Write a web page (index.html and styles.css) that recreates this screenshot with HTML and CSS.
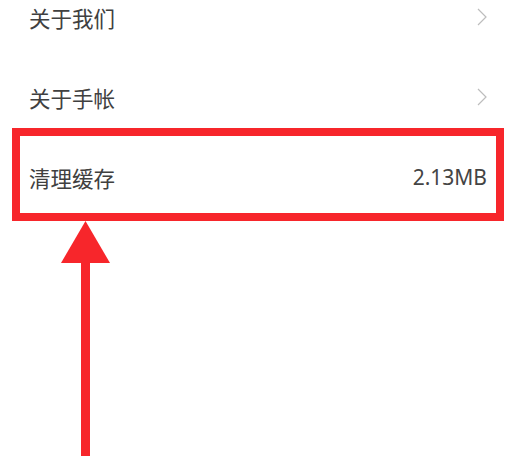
FILE: index.html
```html
<!DOCTYPE html>
<html lang="zh">
<head>
<meta charset="utf-8">
<link rel="stylesheet" href="styles.css">
</head>
<body>
<div class="page">
  <ul class="menu">
    <li class="row">
      <span class="label">关于我们</span>
      <svg class="chev" viewBox="0 0 10 18" width="10" height="18"><path d="M1 1 L9 9 L1 17" fill="none" stroke="#bdbdbd" stroke-width="1.2"/></svg>
    </li>
    <li class="row">
      <span class="label">关于手帐</span>
      <svg class="chev" viewBox="0 0 10 18" width="10" height="18"><path d="M1 1 L9 9 L1 17" fill="none" stroke="#bdbdbd" stroke-width="1.2"/></svg>
    </li>
    <li class="row">
      <span class="label">清理缓存</span>
      <span class="value">2.13MB</span>
    </li>
  </ul>
  <div class="highlight"></div>
  <svg class="arrow" width="515" height="456" viewBox="0 0 515 456">
    <polygon points="85.5,221 61,263 110,263" fill="#f7262b"/>
    <rect x="81" y="260" width="9" height="200" fill="#f7262b"/>
  </svg>
</div>
</body>
</html>
```
FILE: styles.css
```css
html, body {
  margin: 0;
  padding: 0;
  background: #ffffff;
}
.page {
  position: relative;
  width: 515px;
  height: 456px;
  overflow: hidden;
  font-family: "Noto Sans CJK SC", "Noto Sans", sans-serif;
}
.menu {
  list-style: none;
  margin: -23px 0 0 0;
  padding: 0;
}
.row {
  height: 80px;
  display: flex;
  align-items: center;
  justify-content: space-between;
  padding: 0 28px 0 29px;
}
.label {
  font-size: 21.5px;
  color: #404040;
}
.value {
  font-family: "Noto Sans", sans-serif;
  font-size: 21px;
  color: #444444;
}
.chev {
  display: block;
}
.highlight {
  position: absolute;
  left: 12px;
  top: 128px;
  width: 476px;
  height: 77px;
  border: 8px solid #f7262b;
}
.arrow {
  position: absolute;
  left: 0;
  top: 0;
}
```
